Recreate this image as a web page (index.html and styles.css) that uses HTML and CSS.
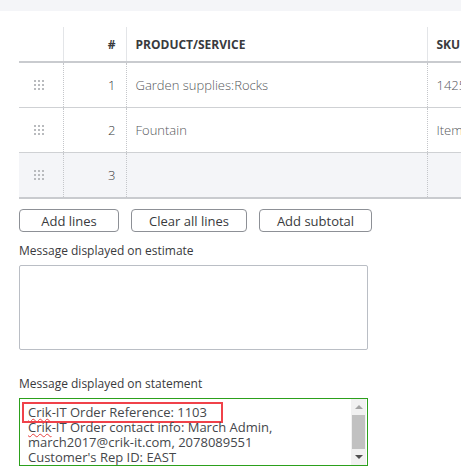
FILE: index.html
```html
<!DOCTYPE html>
<html lang="en">
<head>
    <meta charset="UTF-8">
    <title>Estimate - Product lines</title>
    <link rel="stylesheet" href="styles.css">
</head>
<body>
    <div class="topbar"></div>

    <div class="content">
        <table class="lines">
            <colgroup>
                <col class="c-grip">
                <col class="c-num">
                <col class="c-prod">
                <col class="c-sku">
            </colgroup>
            <thead>
                <tr>
                    <th></th>
                    <th class="num">#</th>
                    <th>PRODUCT/SERVICE</th>
                    <th>SKU</th>
                </tr>
            </thead>
            <tbody>
                <tr>
                    <td><span class="grip"></span></td>
                    <td class="num">1</td>
                    <td>Garden supplies:Rocks</td>
                    <td>1425</td>
                </tr>
                <tr>
                    <td><span class="grip"></span></td>
                    <td class="num">2</td>
                    <td>Fountain</td>
                    <td>Item</td>
                </tr>
                <tr class="active">
                    <td><span class="grip"></span></td>
                    <td class="num">3</td>
                    <td></td>
                    <td></td>
                </tr>
            </tbody>
        </table>

        <div class="actions">
            <button class="btn btn-add">Add lines</button>
            <button class="btn btn-clear">Clear all lines</button>
            <button class="btn btn-sub">Add subtotal</button>
        </div>

        <label class="field-label">Message displayed on estimate</label>
        <div class="textbox estimate"></div>

        <label class="field-label statement-label">Message displayed on statement</label>
        <div class="textbox statement">
            <div class="text">
                <div class="line"><span class="highlight"><span class="typo">Crik</span>-IT Order Reference: 1103</span></div>
                <div class="line"><span class="typo">Crik</span>-IT Order contact info: March Admin,</div>
                <div class="line">march2017@crik-it.com, 2078089551</div>
                <div class="line">Customer's Rep ID: EAST</div>
            </div>
            <div class="scrollbar">
                <span class="arrow up"></span>
                <span class="thumb"></span>
                <span class="arrow down"></span>
            </div>
        </div>
    </div>
</body>
</html>
```

FILE: styles.css
```css
body {
    margin: 0;
    overflow: hidden;
    font-family: "Open Sans", "Liberation Sans", sans-serif;
    font-size: 13px;
    color: #393a3d;
    background: #fff;
}
.topbar {
    height: 11px;
    background: #f4f5f8;
}
.content {
    padding: 16px 0 0 19px;
}
.lines {
    border-collapse: collapse;
    table-layout: fixed;
    width: 520px;
}
.c-grip { width: 44px; }
.c-num { width: 63px; }
.c-prod { width: 301px; }
.lines th {
    height: 34px;
    padding: 0 9px;
    text-align: left;
    font-size: 12px;
    font-weight: 700;
    color: #393a3d;
    border-left: 1px solid #e3e5e8;
    border-bottom: 2px solid #c9cbcf;
}
.lines th:first-child,
.lines td:first-child {
    border-left: none;
}
.lines td {
    height: 44px;
    padding: 0 9px;
    font-weight: 300;
    color: #55575b;
    border-left: 1px dotted #c4c6ca;
    border-bottom: 1px solid #cfd1d4;
    white-space: nowrap;
}
.lines .num {
    text-align: right;
    padding-right: 10px;
    color: #393a3d;
}
.lines tr.active td {
    background: #f4f5f8;
    border-bottom: 2px solid #c9cbcf;
}
.grip {
    display: block;
    width: 10px;
    height: 10px;
    margin-left: 6px;
    background-image: linear-gradient(90deg, #b9bbbe 2px, transparent 2px);
    background-size: 4px 4px;
    -webkit-mask: linear-gradient(#000 2px, transparent 2px) 0 0 / 4px 4px;
    mask: linear-gradient(#000 2px, transparent 2px) 0 0 / 4px 4px;
}
.actions {
    display: flex;
    gap: 12px;
    margin-top: 10px;
}
.btn {
    height: 23px;
    border: 1px solid #8d9096;
    border-radius: 4px;
    background: #fff;
    color: #393a3d;
    font-family: inherit;
    font-size: 13px;
    padding: 0;
}
.btn-add { width: 100px; }
.btn-clear { width: 116px; }
.btn-sub { width: 113px; }
.field-label {
    display: block;
    margin-top: 10px;
    line-height: 18px;
    font-size: 12px;
}
.statement-label {
    margin-top: 25px;
}
.textbox {
    width: 347px;
    border: 1px solid #babec5;
    border-radius: 2px;
    margin-top: 5px;
}
.estimate {
    height: 83px;
}
.statement {
    display: flex;
    height: 66px;
    border-color: #2ca01c;
    border-radius: 0;
    overflow: hidden;
}
.statement .text {
    flex: 1;
    padding: 6px 0 0 8px;
    line-height: 15px;
    font-size: 13px;
    color: #45474b;
    white-space: nowrap;
}
.highlight {
    display: inline-block;
    margin-left: -3px;
    padding: 0 13px 0 3px;
    outline: 2px solid #f0424a;
    outline-offset: 1px;
}
.typo {
    text-decoration: underline wavy #e8423f;
    text-decoration-thickness: 1px;
    text-underline-offset: 1px;
}
.scrollbar {
    width: 15px;
    margin-right: 1px;
    background: #f1f1f1;
    display: flex;
    flex-direction: column;
    align-items: center;
}
.arrow {
    width: 0;
    height: 0;
    border-left: 4px solid transparent;
    border-right: 4px solid transparent;
    margin: 6px 0;
}
.arrow.up {
    border-bottom: 4px solid #a3a3a3;
}
.arrow.down {
    border-top: 4px solid #505050;
}
.thumb {
    width: 13px;
    flex: 1;
    background: #c1c1c1;
}
```
